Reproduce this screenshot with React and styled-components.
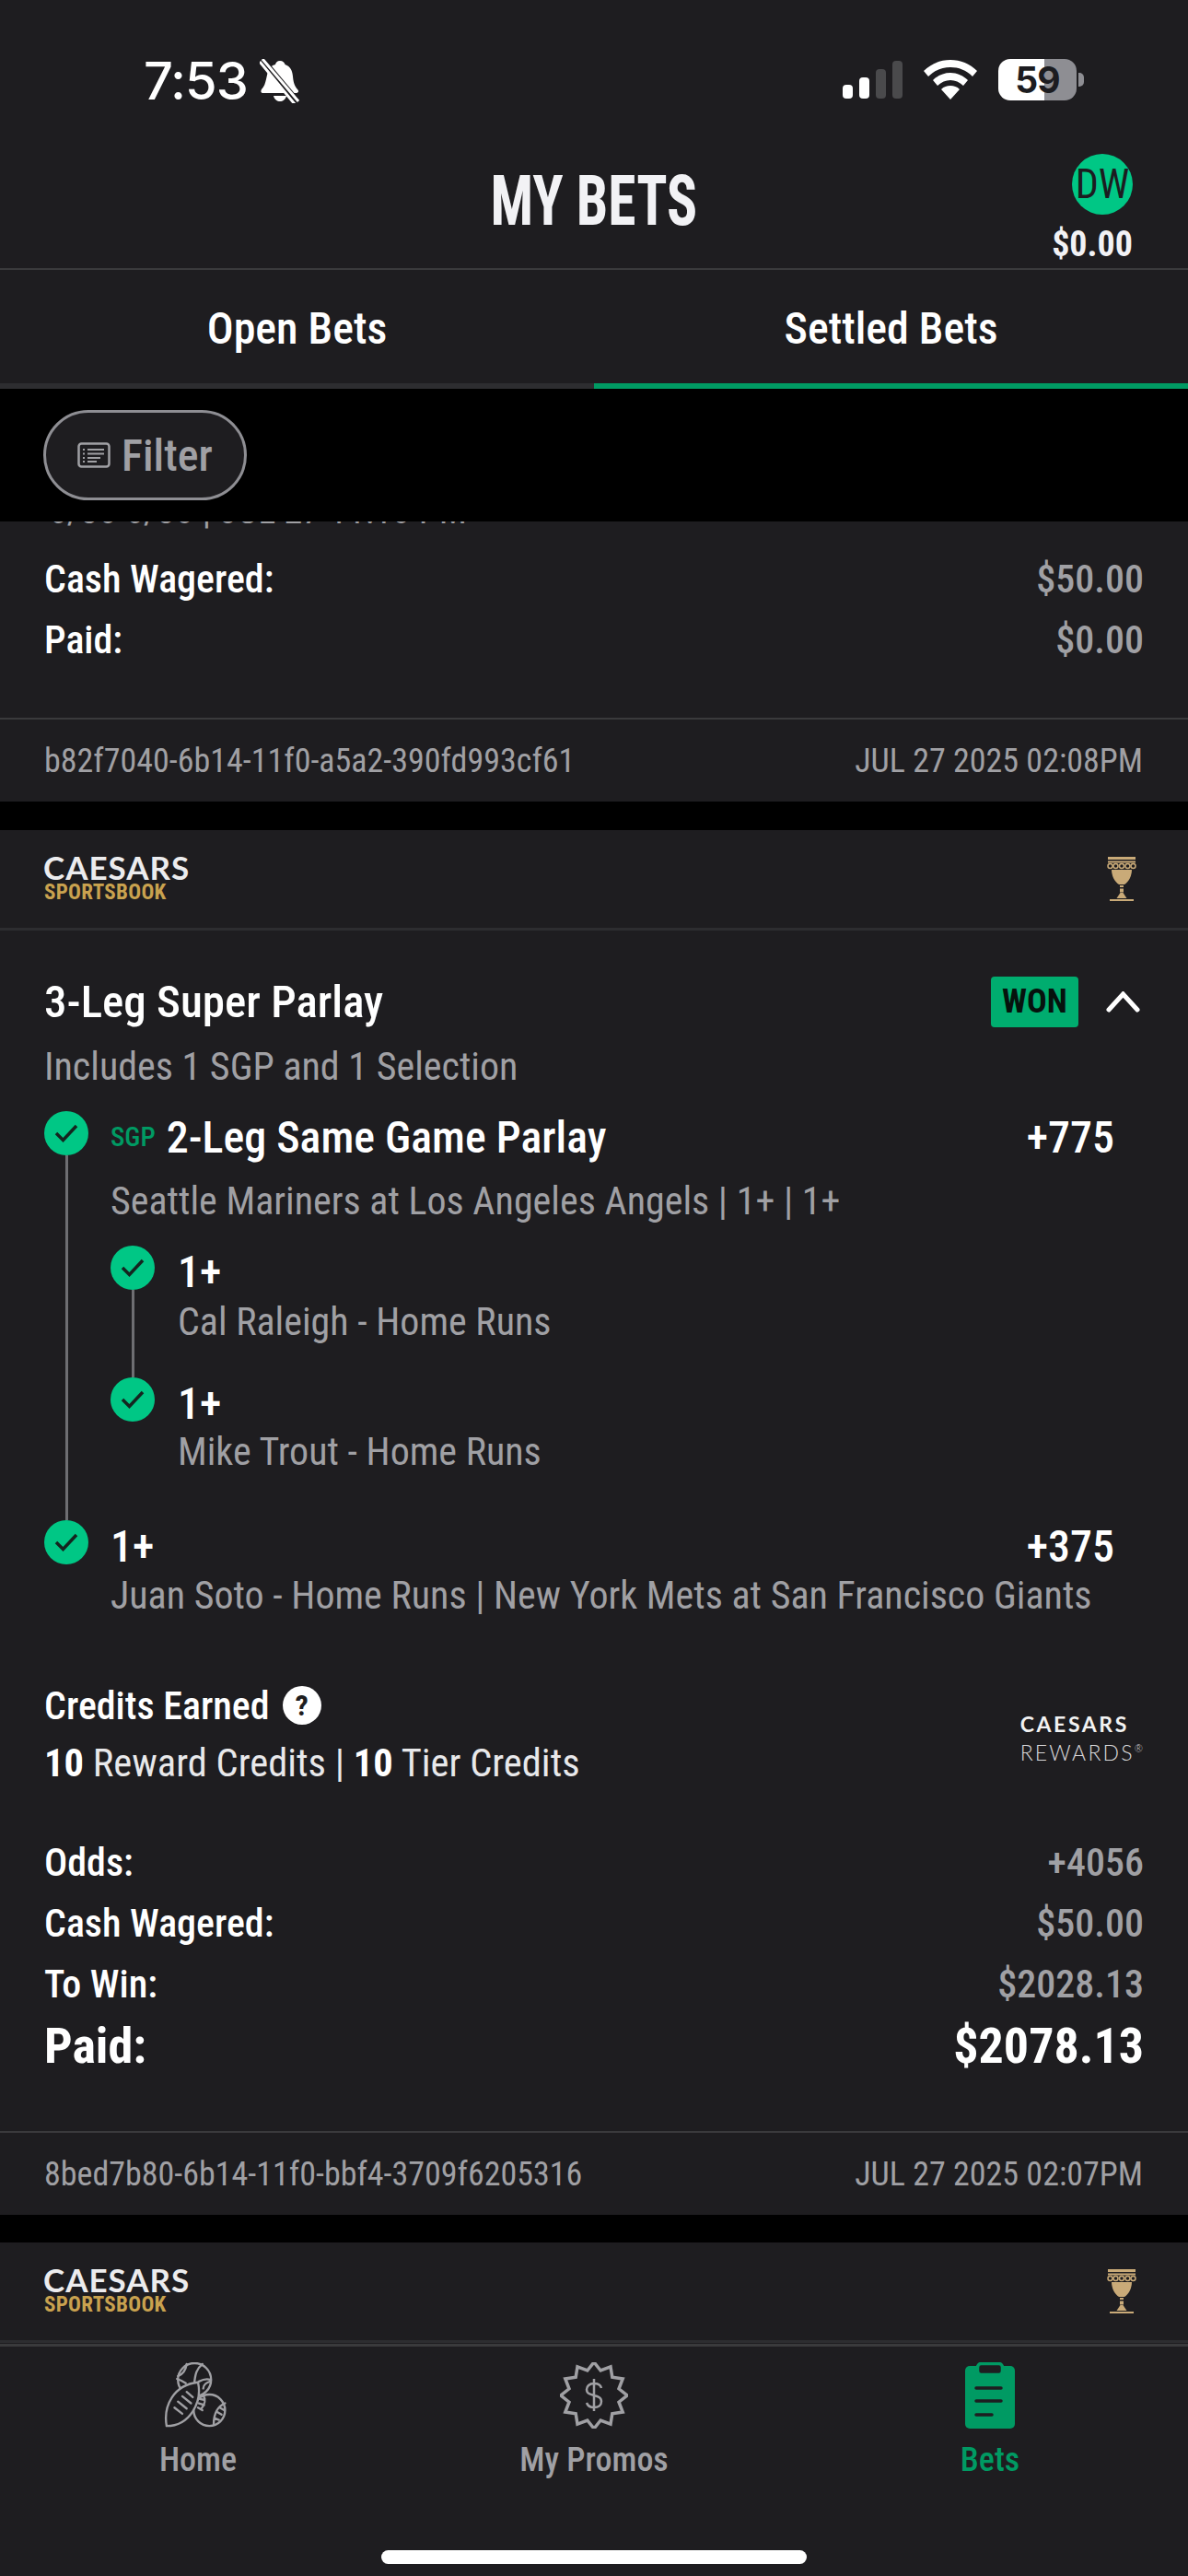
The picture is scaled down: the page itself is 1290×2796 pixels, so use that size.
import styled, { createGlobalStyle } from "styled-components";

const BG = "#1e1d20";
const LINE = "#3a3a3c";
const GRAY = "#a0a0a4";
const MINT = "#00c785";
const GREEN = "#009a63";
const COND = `"Roboto Condensed", "Liberation Sans Narrow", Roboto, sans-serif`;

const GlobalStyle = createGlobalStyle`
  html, body { margin: 0; padding: 0; background: ${BG}; }
  * { box-sizing: border-box; }
`;

const Screen = styled.div`
  width: 1290px;
  height: 2796px;
  display: flex;
  flex-direction: column;
  overflow: hidden;
  background: ${BG};
  color: #fff;
  font-family: ${COND};
`;

const StatusBar = styled.div`
  height: 160px;
  flex: none;
  display: flex;
  justify-content: space-between;
  align-items: flex-start;
  padding: 64px 121px 0 156px;
`;
const StatusLeft = styled.div`
  display: flex;
  align-items: center;
  gap: 13px;
  font: 500 56px/46px Inter, sans-serif;
  letter-spacing: -1px;
`;
const StatusRight = styled.div`
  display: flex;
  align-items: center;
  gap: 23px;
`;
const Signal = styled.div`
  display: flex;
  align-items: flex-end;
  gap: 7px;
  height: 41px;
`;
const SignalBar = styled.i`
  display: block;
  width: 11px;
  height: ${(p) => p.$h}px;
  border-radius: 4px;
  background: ${(p) => (p.$on ? "#fff" : "#4a4a4c")};
`;
const Battery = styled.div`
  position: relative;
  width: 85px;
  height: 45px;
  border-radius: 13px;
  background: linear-gradient(90deg, #fff 0 50px, #8e8e93 50px);
  color: #1c1c20;
  font: 700 39px/45px Inter, sans-serif;
  letter-spacing: -1px;
  text-align: center;
  &::after {
    content: "";
    position: absolute;
    right: -8px;
    top: 15px;
    width: 6px;
    height: 15px;
    border-radius: 0 5px 5px 0;
    background: #8e8e93;
  }
`;

const Header = styled.header`
  height: 133px;
  flex: none;
  position: relative;
  display: flex;
  justify-content: center;
  border-bottom: 2px solid ${LINE};
`;
const Title = styled.h1`
  margin: 16px 0 0;
  font-size: 76px;
  line-height: 84px;
  font-weight: 700;
  color: #f2f2f5;
  transform: scaleX(0.81);
`;
const Account = styled.div`
  position: absolute;
  right: 60px;
  top: 7px;
  display: flex;
  flex-direction: column;
  align-items: flex-end;
  gap: 10px;
`;
const Avatar = styled.div`
  width: 66px;
  height: 66px;
  border-radius: 50%;
  background: ${MINT};
  color: #1c1c20;
  font-size: 44px;
  line-height: 66px;
  text-align: center;
`;
const Balance = styled.div`
  font-size: 38px;
  line-height: 44px;
  font-weight: 700;
  color: #f2f2f5;
`;

const Tabs = styled.nav`
  height: 129px;
  flex: none;
  display: flex;
`;
const Tab = styled.div`
  flex: 1;
  display: flex;
  align-items: center;
  justify-content: center;
  padding-top: 3px;
  font-size: 48px;
  font-weight: 500;
  border-bottom: 6px solid ${(p) => (p.$active ? GREEN : "#2d2d30")};
`;

const FilterBar = styled.div`
  height: 144px;
  flex: none;
  background: #000;
  padding: 23px 0 0 47px;
`;
const FilterButton = styled.div`
  width: 221px;
  height: 98px;
  display: flex;
  align-items: center;
  gap: 12px;
  padding-left: 34px;
  border: 3px solid #8e8e93;
  border-radius: 49px;
  background: ${BG};
  color: ${GRAY};
  font-size: 48px;
  font-weight: 500;
`;

const Scroll = styled.main`
  flex: 1;
  min-height: 0;
  overflow: hidden;
`;
const Cut = styled.div`
  height: 8px;
  overflow: hidden;
  padding-left: 53px;
  font-size: 40px;
  line-height: 44px;
  color: ${GRAY};
  & > span {
    display: block;
    margin-top: -33px;
  }
`;
const Stats = styled.section`
  padding: ${(p) => p.$top}px 48px ${(p) => p.$bottom}px;
`;
const StatRow = styled.div`
  height: ${(p) => (p.$big ? 69 : 66)}px;
  display: flex;
  align-items: center;
  justify-content: space-between;
  font-size: ${(p) => (p.$big ? 54 : 42)}px;
  font-weight: ${(p) => (p.$big ? 700 : 500)};
`;
const StatValue = styled.span`
  color: ${(p) => (p.$big ? "#fff" : GRAY)};
`;
const Meta = styled.div`
  height: 91px;
  display: flex;
  align-items: center;
  justify-content: space-between;
  padding: 0 49px 0 48px;
  border-top: 2px solid ${LINE};
  font-size: 36px;
  color: ${GRAY};
`;
const Gap = styled.div`
  height: ${(p) => p.$h}px;
  background: #000;
`;
const BookRow = styled.div`
  height: 109px;
  display: flex;
  align-items: center;
  justify-content: space-between;
  padding: 0 56px 0 47px;
  border-bottom: 3px solid #2d2d30;
`;
const Logo = styled.div`
  display: flex;
  flex-direction: column;
  margin-top: -4px;
`;
const LogoTop = styled.span`
  font: 700 35px/34px Lato, sans-serif;
  letter-spacing: 1px;
  color: #ececee;
`;
const LogoBottom = styled.span`
  margin-left: 1px;
  font-size: 23px;
  line-height: 22px;
  font-weight: 700;
  letter-spacing: 0.3px;
  color: #c9a24f;
`;

const Bet = styled.section`
  padding: 50px 48px 0;
`;
const BetHead = styled.div`
  display: flex;
  align-items: center;
  justify-content: space-between;
  height: 55px;
`;
const BetTitle = styled.div`
  font-size: 49px;
  font-weight: 500;
`;
const BetStatus = styled.div`
  display: flex;
  align-items: center;
  gap: 30px;
  margin-right: 4px;
`;
const Won = styled.div`
  width: 95px;
  height: 55px;
  border-radius: 4px;
  background: #00ad6f;
  color: #06120d;
  font-size: 36px;
  line-height: 55px;
  font-weight: 700;
  text-align: center;
`;
const Sub = styled.div`
  margin-top: ${(p) => p.$top || 0}px;
  font-size: 42px;
  line-height: 44px;
  color: ${GRAY};
`;
const Leg = styled.div`
  display: flex;
  gap: ${(p) => p.$gap}px;
`;
const Marker = styled.div`
  flex: none;
  width: 48px;
  display: flex;
  flex-direction: column;
  align-items: center;
`;
const Check = styled.div`
  flex: none;
  width: 48px;
  height: 48px;
  border-radius: 50%;
  background: ${MINT};
  display: flex;
  align-items: center;
  justify-content: center;
`;
const Rail = styled.div`
  flex: 1;
  width: 3px;
  background: #6e6e72;
`;
const LegBody = styled.div`
  flex: 1;
  min-width: 0;
  padding-bottom: ${(p) => p.$bottom || 0}px;
`;
const LegTitleRow = styled.div`
  display: flex;
  align-items: center;
  justify-content: space-between;
  padding-right: 32px;
  height: 56px;
  font-size: 48px;
  font-weight: 500;
`;
const LegName = styled.span`
  display: flex;
  align-items: center;
  gap: 12px;
`;
const Sgp = styled.span`
  font-size: 29px;
  color: ${GREEN};
`;
const Nested = styled.div`
  margin-top: 26px;
`;
const Credits = styled.div`
  margin: 75px 0 52px;
  display: flex;
  align-items: center;
  justify-content: space-between;
`;
const CreditsHead = styled.div`
  display: flex;
  align-items: center;
  gap: 14px;
  height: 44px;
  font-size: 42px;
  font-weight: 500;
`;
const Help = styled.div`
  width: 42px;
  height: 42px;
  border-radius: 50%;
  background: #fff;
  color: ${BG};
  font-size: 32px;
  line-height: 42px;
  font-weight: 700;
  text-align: center;
`;
const CreditsLine = styled.div`
  margin-top: 19px;
  font-size: 42.500px;
  line-height: 44px;
  color: #e8e8ea;
  b {
    color: #fff;
  }
`;
const Rewards = styled.div`
  display: flex;
  flex-direction: column;
  align-items: flex-start;
  margin: 6px 1px 0 0;
`;
const RewardsTop = styled.span`
  font: 700 23px/28px Lato, sans-serif;
  letter-spacing: 2.600px;
  color: #f2f2f2;
`;
const RewardsBottom = styled.span`
  font: 300 23px/26px Lato, sans-serif;
  letter-spacing: 2.200px;
  color: #d8d8da;
  sup {
    font-size: 11px;
    letter-spacing: 0;
  }
`;

const BottomNav = styled.footer`
  flex: none;
  height: 252px;
  display: flex;
  flex-direction: column;
  align-items: center;
  border-top: 3px solid ${LINE};
`;
const NavItems = styled.div`
  width: 100%;
  display: grid;
  grid-template-columns: repeat(3, 1fr);
  padding-top: 17px;
`;
const NavItem = styled.div`
  display: flex;
  flex-direction: column;
  align-items: center;
  gap: 12px;
  font-size: 36px;
  line-height: 44px;
  font-weight: 500;
  color: ${(p) => (p.$active ? GREEN : GRAY)};
  svg {
    display: block;
  }
`;
const HomeBar = styled.div`
  margin-top: 76px;
  width: 462px;
  height: 15px;
  border-radius: 8px;
  background: #fff;
`;

const BellOff = () => (
  <svg width="44" height="48" viewBox="0 0 44 48">
    <path fill="#fff" d="M22 2c3 0 5 2 5.500 4 6 2 8 7 8.500 13 .5 5 1 9 5 14 2 2 1 4-2 4H4c-3 0-3-2-2-4 3-3 4-7 5-11l2-9c1-3 4-6 8-7 .5-2 2-4 5-4z" />
    <path fill="#fff" d="M15 40h14c-1 4-4 6-7 6s-6-2-7-6z" />
    <path stroke={BG} strokeWidth="7" d="M1-1l42 50" />
    <path stroke="#fff" strokeWidth="3" d="M3 0l39 46M0 3l38 46" />
  </svg>
);

const Wifi = () => (
  <svg width="58" height="43" viewBox="0 0 58 43" fill="#fff">
    <path d="M29 0c11 0 21 4 29 12l-5 6C46 11 38 8 29 8S12 11 5 18L0 12C8 4 18 0 29 0z" />
    <path d="M29 14c7 0 14 3 19 8l-5 6c-4-4-9-6-14-6s-10 2-14 6l-5-6c5-5 12-8 19-8z" />
    <path d="M29 28c4 0 7 1 10 4L29 43 19 32c3-3 6-4 10-4z" />
  </svg>
);

const ListIcon = () => (
  <svg width="36" height="28" viewBox="0 0 36 28" fill="none" stroke={GRAY}>
    <rect x="1.500" y="1.500" width="33" height="25" rx="3" strokeWidth="2.500" />
    <path strokeWidth="2" d="M11 8h18M11 12.500h18M11 17h14M11 21h10M6 8h2M6 12.500h2M6 17h2M6 21h2" />
  </svg>
);

const Chevron = () => (
  <svg width="37" height="23" viewBox="0 0 37 23" fill="none" stroke="#fff" strokeWidth="5" strokeLinecap="round">
    <path d="M3 20L18.500 3 34 20" />
  </svg>
);

const Tick = () => (
  <svg width="26" height="20" viewBox="0 0 26 20" fill="none" stroke="#14251f" strokeWidth="3.500">
    <path d="M2 10l7.500 7.500L24 2" />
  </svg>
);

const Goblet = () => (
  <svg width="32" height="48" viewBox="0 0 32 48" fill="#c9aa78">
    <rect x="1" width="30" height="3" />
    <rect x="1" y="4.500" width="30" height="2" />
    <g fill="none" stroke="#c9aa78" strokeWidth="1.500">
      <circle cx="3.500" cy="10" r="2.500" />
      <circle cx="9.500" cy="10" r="2.500" />
      <circle cx="16" cy="10" r="2.500" />
      <circle cx="22.500" cy="10" r="2.500" />
      <circle cx="28.500" cy="10" r="2.500" />
    </g>
    <path d="M5 14h22c0 6-3 13-8 16h-6C8 27 5 20 5 14z" />
    <rect x="14" y="31" width="4" height="2" />
    <rect x="14" y="34.500" width="4" height="4" />
    <path d="M14.500 39h3l4 6h-11z" />
    <rect x="3" y="46" width="26" height="2" />
  </svg>
);

const BallsIcon = () => (
  <svg width="74" height="72" viewBox="0 0 78 76" fill={BG} stroke={GRAY} strokeWidth="2.500" strokeLinecap="round">
    <circle cx="35" cy="20" r="19" />
    <path fill="none" d="M26 2c-1 7-5 12-10 14M25 24c-3-2-7-4-10-5M35 22c1-8 2-14 9-20M40 22c4-2 10-3 13-2M45 30c0-4 4-7 8-8" />
    <circle cx="52" cy="55" r="18" />
    <path fill="none" d="M45 38c3 4 2 10-2 15M70 47c-7 3-13 10-13 24M41 42l5 1M40 47l6 2M39 52l5 3M69 55l-5-3M66 60l-5-3M63 66l-5-2" />
    <path d="M3 73C-1 50 11 26 39 23c5 22-9 50-36 50z" />
    <path fill="none" d="M12 52l9 7M16 45l10 8M21 39l10 8M26 34l7 6" />
  </svg>
);

const burst = Array.from({ length: 24 }, (_, i) => {
  const r = i % 2 ? 28 : 36;
  const a = (i * Math.PI) / 12 - Math.PI / 2;
  return `${(37 + r * Math.cos(a)).toFixed(1)},${(36 + r * Math.sin(a)).toFixed(1)}`;
}).join(" ");

const PromoIcon = () => (
  <svg width="74" height="72" viewBox="0 0 74 72" fill="none" stroke={GRAY}>
    <polygon points={burst} strokeWidth="3.500" />
    <path strokeWidth="2.500" d="M45 28c-1-4-4-5-8-5-5 0-8 3-8 6.500 0 9 16 4 16 13 0 4-3 6.500-8 6.500-4 0-7-2-8-5M37 18v35" />
  </svg>
);

const ClipboardIcon = () => (
  <svg width="56" height="72" viewBox="0 0 56 72">
    <rect x="1" y="4" width="54" height="68" rx="5" fill={GREEN} />
    <rect x="14.500" y="1.500" width="27" height="12" rx="4" fill={BG} stroke={GREEN} strokeWidth="3.500" />
    <path stroke={BG} strokeWidth="3.500" strokeLinecap="round" d="M13 28h27M13 42h27M13 57h17" />
  </svg>
);

const BookHeader = () => (
  <BookRow>
    <Logo>
      <LogoTop>CAESARS</LogoTop>
      <LogoBottom>SPORTSBOOK</LogoBottom>
    </Logo>
    <Goblet />
  </BookRow>
);

export default function App() {
  return (
    <Screen>
      <GlobalStyle />
      <StatusBar>
        <StatusLeft>
          7:53
          <BellOff />
        </StatusLeft>
        <StatusRight>
          <Signal>
            <SignalBar $h={15} $on />
            <SignalBar $h={23} $on />
            <SignalBar $h={32} />
            <SignalBar $h={41} />
          </Signal>
          <Wifi />
          <Battery>59</Battery>
        </StatusRight>
      </StatusBar>

      <Header>
        <Title>MY BETS</Title>
        <Account>
          <Avatar>DW</Avatar>
          <Balance>$0.00</Balance>
        </Account>
      </Header>

      <Tabs>
        <Tab>Open Bets</Tab>
        <Tab $active>Settled Bets</Tab>
      </Tabs>

      <FilterBar>
        <FilterButton>
          <ListIcon />
          Filter
        </FilterButton>
      </FilterBar>

      <Scroll>
        <Cut>
          <span>6/30 6/30 | JUL 27 11:10 PM</span>
        </Cut>
        <Stats $top={21} $bottom={52}>
          <StatRow>
            Cash Wagered:<StatValue>$50.00</StatValue>
          </StatRow>
          <StatRow>
            Paid:<StatValue>$0.00</StatValue>
          </StatRow>
        </Stats>
        <Meta>
          <span>b82f7040-6b14-11f0-a5a2-390fd993cf61</span>
          <span>JUL 27 2025 02:08PM</span>
        </Meta>
        <Gap $h={31} />
        <BookHeader />

        <Bet>
          <BetHead>
            <BetTitle>3-Leg Super Parlay</BetTitle>
            <BetStatus>
              <Won>WON</Won>
              <Chevron />
            </BetStatus>
          </BetHead>
          <Sub $top={21}>Includes 1 SGP and 1 Selection</Sub>

          <Nested>
            <Leg $gap={24}>
              <Marker>
                <Check><Tick /></Check>
                <Rail />
              </Marker>
              <LegBody>
                <LegTitleRow>
                  <LegName>
                    <Sgp>SGP</Sgp>
                    2-Leg Same Game Parlay
                  </LegName>
                  <span>+775</span>
                </LegTitleRow>
                <Sub $top={20}>Seattle Mariners at Los Angeles Angels | 1+ | 1+</Sub>
                <Nested>
                  <Leg $gap={25}>
                    <Marker>
                      <Check><Tick /></Check>
                      <Rail />
                    </Marker>
                    <LegBody $bottom={38}>
                      <LegTitleRow>1+</LegTitleRow>
                      <Sub $top={5}>Cal Raleigh - Home Runs</Sub>
                    </LegBody>
                  </Leg>
                  <Leg $gap={25}>
                    <Marker>
                      <Check><Tick /></Check>
                    </Marker>
                    <LegBody $bottom={52}>
                      <LegTitleRow>1+</LegTitleRow>
                      <Sub $top={3}>Mike Trout - Home Runs</Sub>
                    </LegBody>
                  </Leg>
                </Nested>
              </LegBody>
            </Leg>
            <Leg $gap={24}>
              <Marker>
                <Check><Tick /></Check>
              </Marker>
              <LegBody>
                <LegTitleRow>
                  1+
                  <span>+375</span>
                </LegTitleRow>
                <Sub $top={4}>Juan Soto - Home Runs | New York Mets at San Francisco Giants</Sub>
              </LegBody>
            </Leg>
          </Nested>

          <Credits>
            <div>
              <CreditsHead>
                Credits Earned
                <Help>?</Help>
              </CreditsHead>
              <CreditsLine>
                <b>10</b> Reward Credits | <b>10</b> Tier Credits
              </CreditsLine>
            </div>
            <Rewards>
              <RewardsTop>CAESARS</RewardsTop>
              <RewardsBottom>
                REWARDS<sup>®</sup>
              </RewardsBottom>
            </Rewards>
          </Credits>
        </Bet>

        <Stats $top={0} $bottom={58}>
          <StatRow>
            Odds:<StatValue>+4056</StatValue>
          </StatRow>
          <StatRow>
            Cash Wagered:<StatValue>$50.00</StatValue>
          </StatRow>
          <StatRow>
            To Win:<StatValue>$2028.13</StatValue>
          </StatRow>
          <StatRow $big>
            Paid:<StatValue $big>$2078.13</StatValue>
          </StatRow>
        </Stats>
        <Meta>
          <span>8bed7b80-6b14-11f0-bbf4-3709f6205316</span>
          <span>JUL 27 2025 02:07PM</span>
        </Meta>
        <Gap $h={30} />
        <BookHeader />
      </Scroll>

      <BottomNav>
        <NavItems>
          <NavItem>
            <BallsIcon />
            Home
          </NavItem>
          <NavItem>
            <PromoIcon />
            My Promos
          </NavItem>
          <NavItem $active>
            <ClipboardIcon />
            Bets
          </NavItem>
        </NavItems>
        <HomeBar />
      </BottomNav>
    </Screen>
  );
}
